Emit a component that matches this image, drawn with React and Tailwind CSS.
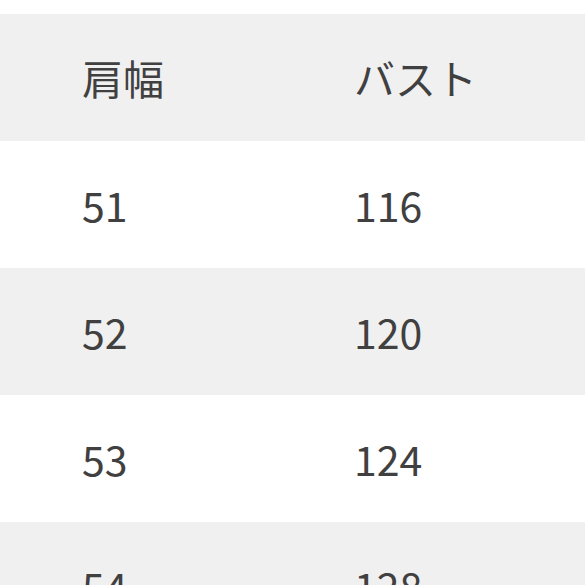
import React from 'react';

const rows = [
  ['肩幅', 'バスト'],
  ['51', '116'],
  ['52', '120'],
  ['53', '124'],
  ['54', '128'],
];

export default function App() {
  return (
    <div
      className="w-[585px] h-[585px] overflow-hidden bg-white pt-[14px] text-[#404040]"
      style={{ fontFamily: '"Noto Sans CJK JP", "Noto Sans", sans-serif' }}
    >
      {rows.map((r, i) => (
        <div
          key={i}
          className={`flex items-center h-[127px] pl-[82px] text-[41px] font-normal leading-none ${i % 2 === 0 ? 'bg-[#f0f0f0]' : 'bg-white'}`}
        >
          <div className="w-[272px]">{r[0]}</div>
          <div>{r[1]}</div>
        </div>
      ))}
    </div>
  );
}
